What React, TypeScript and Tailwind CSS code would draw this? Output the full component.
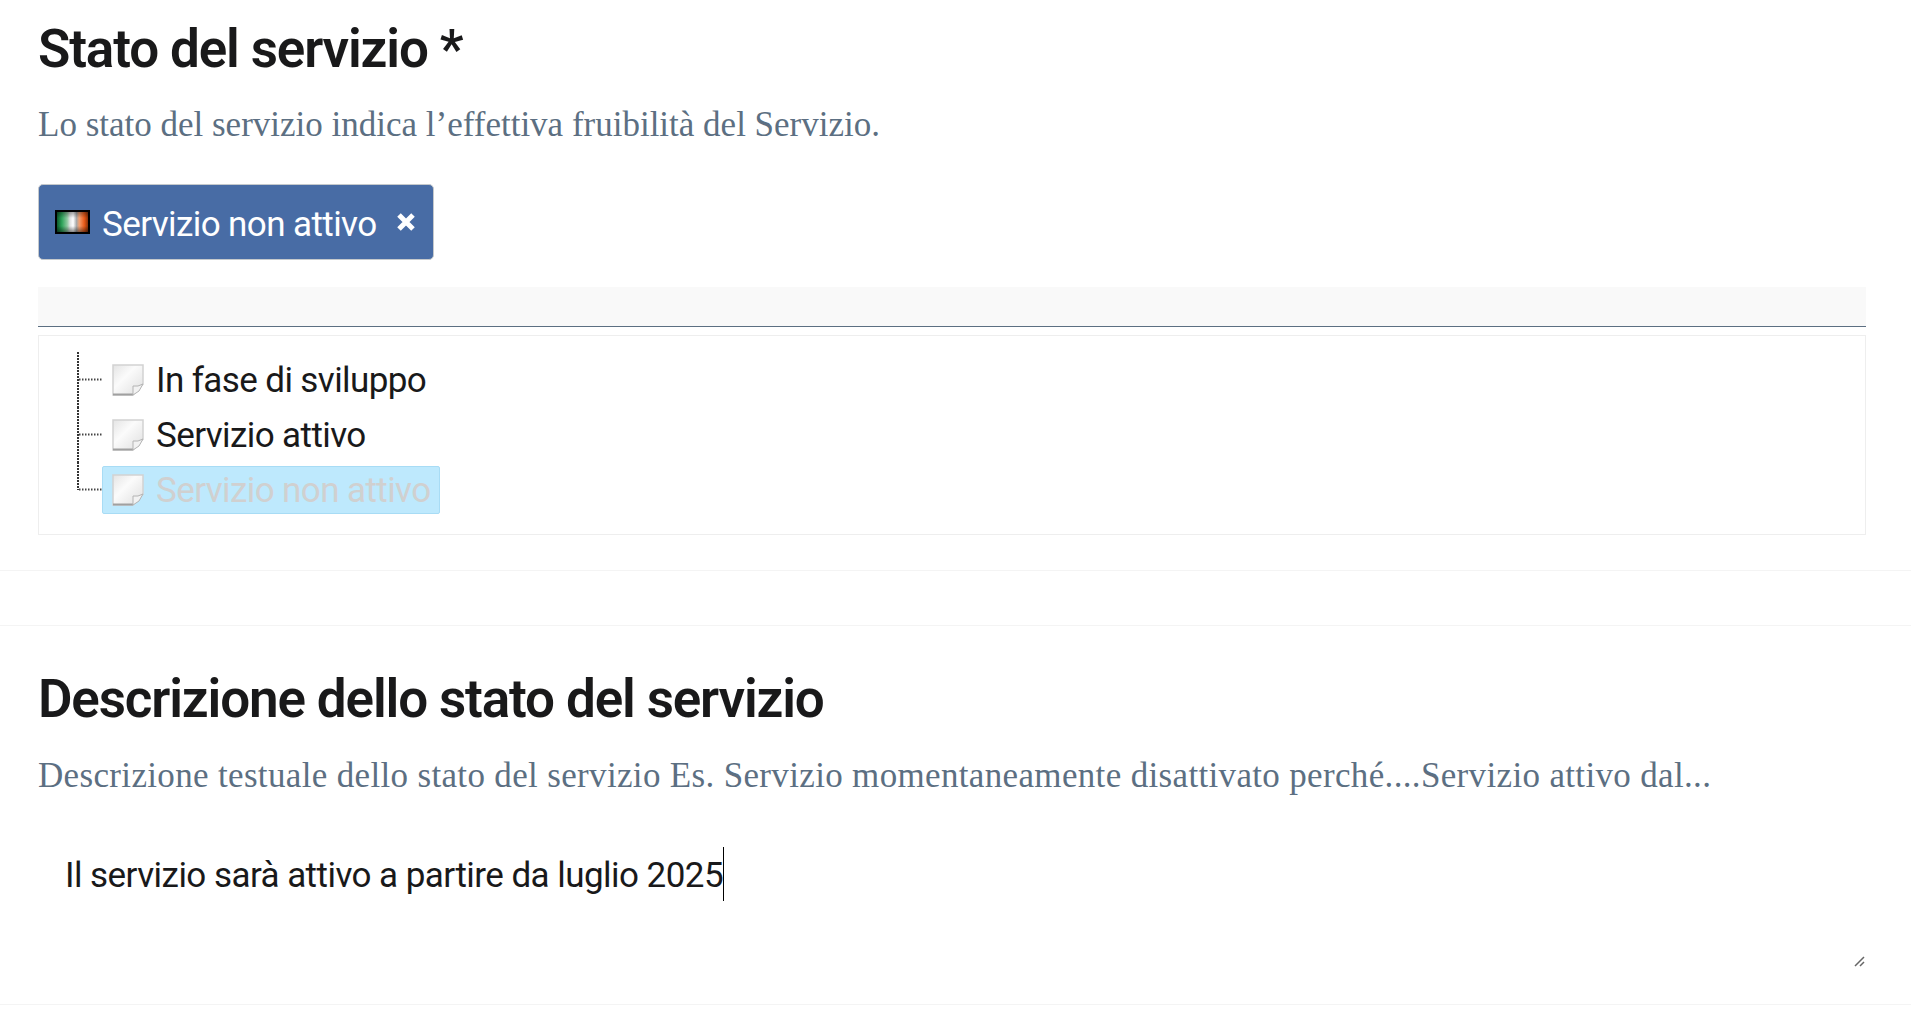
const sans = "font-['Roboto',sans-serif]";
const serif = "font-['Liberation_Serif',serif]";

function NoteIcon() {
  return (
    <svg width="32" height="32" viewBox="0 0 32 32" className="shrink-0">
      <defs>
        <linearGradient id="note" x1="0" y1="0" x2="1" y2="1">
          <stop offset="0" stopColor="#e4e4e4" />
          <stop offset="0.4" stopColor="#fbfbfb" />
          <stop offset="1" stopColor="#dedede" />
        </linearGradient>
      </defs>
      <path d="M1 1H31V20L21 31H1Z" fill="url(#note)" stroke="#d2d2d2" strokeWidth="1.5" />
      <path d="M1 30.5H21" stroke="#a0a0a0" strokeWidth="2" />
      <path d="M21 31V22Q26 23 31 20L27 27Z" fill="#f2f2f2" stroke="#b4b4b4" />
    </svg>
  );
}

function Flag() {
  return (
    <svg width="35" height="24" viewBox="0 0 35 24" className="shrink-0">
      <defs>
        <linearGradient id="flag" x1="0" y1="0" x2="1" y2="0">
          <stop offset="0" stopColor="#0c5a2c" />
          <stop offset="0.16" stopColor="#2fa45a" />
          <stop offset="0.33" stopColor="#8fc9a0" />
          <stop offset="0.42" stopColor="#e2e2e2" />
          <stop offset="0.52" stopColor="#ffffff" />
          <stop offset="0.63" stopColor="#a8a8a8" />
          <stop offset="0.72" stopColor="#f4a070" />
          <stop offset="0.88" stopColor="#e85a18" />
          <stop offset="1" stopColor="#8a3208" />
        </linearGradient>
        <linearGradient id="flagShade" x1="0" y1="0" x2="0" y2="1">
          <stop offset="0" stopColor="#000" stopOpacity="0.35" />
          <stop offset="0.3" stopColor="#000" stopOpacity="0" />
          <stop offset="0.7" stopColor="#000" stopOpacity="0" />
          <stop offset="1" stopColor="#000" stopOpacity="0.45" />
        </linearGradient>
      </defs>
      <rect width="35" height="24" fill="#000" />
      <rect x="2" y="2" width="31" height="20" fill="url(#flag)" />
      <rect x="2" y="2" width="31" height="20" fill="url(#flagShade)" />
    </svg>
  );
}

function Connector({ last }: { last?: boolean }) {
  return (
    <svg width="26" height="55" viewBox="0 0 26 55" className="shrink-0">
      <line x1="1" y1="0" x2="1" y2={last ? 28 : 55} stroke="#333" strokeWidth="2" strokeDasharray="2 1" />
      <line x1="2" y1="27.5" x2="26" y2="27.5" stroke="#444" strokeWidth="2" strokeDasharray="1.5 1.5" />
    </svg>
  );
}

function Row({ label, selected, last }: { label: string; selected?: boolean; last?: boolean }) {
  return (
    <div className="flex items-center h-[55px]">
      <Connector last={last} />
      <div className={`flex items-center h-[48px] pl-[9px] pr-[8px] gap-[12px] rounded-[2px] text-[35px] ${selected ? "bg-[#bee9fd] border border-[#a8dcf5] text-[#d0d0d0] -ml-px" : "text-[#19191a]"}`}>
        <NoteIcon />
        <span className="tracking-[-0.6px] leading-none pt-[2px]">{label}</span>
      </div>
    </div>
  );
}

export default function App() {
  return (
    <div className={`w-[1911px] h-[1024px] overflow-hidden bg-white ${sans}`}>
      <section className="pl-[38px] pr-[45px] pt-[17px]">
        <h2 className="text-[53px] leading-[64px] font-semibold text-[#19191a] tracking-[-1.15px]">Stato del servizio *</h2>
        <p className={`mt-[22px] text-[35px] leading-[44px] text-[#5c6f82] ${serif}`}>
          Lo stato del servizio indica l’effettiva fruibilità del Servizio.
        </p>
        <div className="mt-[37px] flex items-center h-[76px] w-[396px] pl-[16px] pr-[18px] rounded-[5px] bg-[#486ca5] border border-[#c5c9cc] text-white">
          <Flag />
          <span className="ml-[12px] text-[35px] tracking-[-0.6px] leading-none pt-[4px]">Servizio non attivo</span>
          <svg width="18" height="18" viewBox="0 0 18 18" className="ml-auto">
            <path d="M2 2L16 16M16 2L2 16" stroke="#fff" strokeWidth="5" />
          </svg>
        </div>
        <div className="mt-[27px] h-[40px] bg-[#f9f9f9] border-b border-[#5c6f82]" />
        <div className="mt-[8px] h-[200px] border border-[#eeeeee] pl-[38px] pt-[16px]">
          <Row label="In fase di sviluppo" />
          <Row label="Servizio attivo" />
          <Row label="Servizio non attivo" selected last />
        </div>
      </section>
      <div className="mt-[35px] h-[56px] border-y border-[#f4f4f4]" />
      <section className="pl-[38px] pr-[45px] pt-[41px]">
        <h2 className="text-[53px] leading-[64px] font-semibold text-[#19191a] tracking-[-1.15px]">Descrizione dello stato del servizio</h2>
        <p className={`mt-[23px] text-[35px] leading-[44px] text-[#5c6f82] tracking-[0.34px] ${serif}`}>
          Descrizione testuale dello stato del servizio Es. Servizio momentaneamente disattivato perché....Servizio attivo dal...
        </p>
        <div className="relative mt-[49px] h-[129px] pl-[27px] text-[35px] text-[#19191a]">
          <span className="inline-block h-[54px] leading-[58px] border-r border-black tracking-[-0.55px]">Il servizio sarà attivo a partire da luglio 2025</span>
          <svg width="12" height="12" viewBox="0 0 12 12" className="absolute right-0 bottom-[8px]">
            <path d="M1 10L10 1M6 10L10 6" stroke="#666" strokeWidth="1.5" />
          </svg>
        </div>
      </section>
      <div className="mt-[28px] border-t border-[#f4f4f4]" />
    </div>
  );
}
